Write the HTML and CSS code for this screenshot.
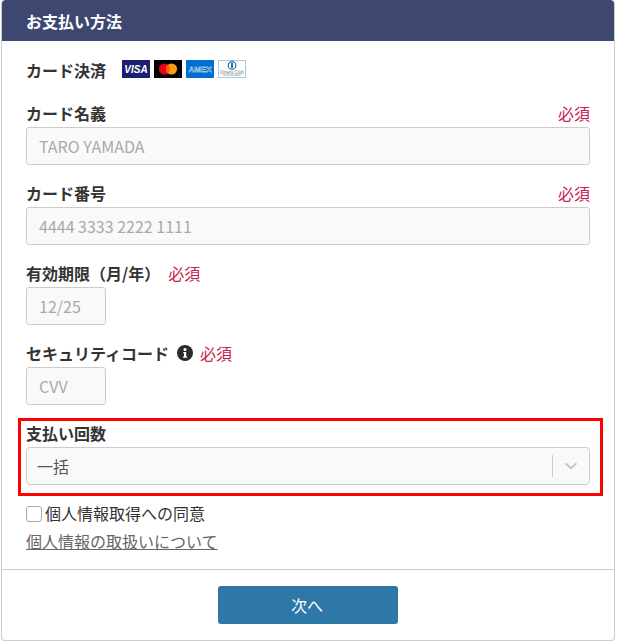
FILE: index.html
```html
<!DOCTYPE html>
<html lang="ja">
<head>
  <meta charset="utf-8">
  <title>お支払い方法</title>
  <link rel="stylesheet" href="styles.css">
</head>
<body>
  <div class="card">
    <div class="card-head">お支払い方法</div>

    <div class="card-body">
      <div class="brand-row">
        <span class="field-label">カード決済</span>
        <div class="brands">
          <svg class="brand" viewBox="0 0 28 18">
            <rect width="28" height="18" fill="#1a1f71"/>
            <text class="visa-text" x="14" y="13">VISA</text>
          </svg>
          <svg class="brand" viewBox="0 0 28 18">
            <rect width="28" height="18" fill="#000"/>
            <circle cx="10.5" cy="9" r="5.6" fill="#eb001b"/>
            <circle cx="17.5" cy="9" r="5.6" fill="#f79e1b"/>
            <path d="M14 4.6a5.6 5.6 0 0 1 0 8.800a5.6 5.6 0 0 1 0-8.800z" fill="#ff5f00"/>
          </svg>
          <svg class="brand" viewBox="0 0 28 18">
            <rect width="28" height="18" rx="1" fill="#016fd0"/>
            <text class="amex-text" x="14" y="12">AMEX</text>
          </svg>
          <svg class="brand" viewBox="0 0 28 18">
            <rect x="0.5" y="0.5" width="27" height="17" fill="#fff" stroke="#a9c8dc"/>
            <circle cx="14" cy="5.500" r="3.800" fill="#fff" stroke="#1b6fa8" stroke-width="1.200"/>
            <rect x="13" y="3" width="2" height="5" fill="#1b6fa8"/>
            <text class="diners-text" x="14" y="13.500">Diners Club</text>
            <rect x="5" y="14.500" width="18" height="1.200" fill="#b5bcc2"/>
          </svg>
        </div>
      </div>

      <div class="field">
        <label class="field-label label-split">カード名義 <span class="required">必須</span></label>
        <input class="text-input" type="text" placeholder="TARO YAMADA">
      </div>

      <div class="field">
        <label class="field-label label-split">カード番号 <span class="required">必須</span></label>
        <input class="text-input" type="text" placeholder="4444 3333 2222 1111">
      </div>

      <div class="field">
        <label class="field-label label-inline">有効期限（月/年） <span class="required">必須</span></label>
        <input class="text-input short" type="text" placeholder="12/25">
      </div>

      <div class="field">
        <label class="field-label label-inline">セキュリティコード
          <svg class="info-icon" viewBox="0 0 16 16">
            <circle cx="8" cy="8" r="8" fill="#2b2b2b"/>
            <circle cx="8" cy="4.400" r="1.500" fill="#fff"/>
            <path d="M6.300 6.900h2.900v4.500h1v1.300H6v-1.300h1V8.200H6.300z" fill="#fff"/>
          </svg>
          <span class="required">必須</span>
        </label>
        <input class="text-input short" type="text" placeholder="CVV">
      </div>

      <div class="highlight">
        <label class="field-label">支払い回数</label>
        <div class="select-box">
          <span class="select-value">一括</span>
          <span class="select-sep"></span>
          <svg class="select-arrow" viewBox="0 0 14 8">
            <path d="M1.500 1.200L7 6.300l5.500-5.100" fill="none" stroke="#c8c8c8" stroke-width="2"/>
          </svg>
        </div>
      </div>

      <label class="agree">
        <input class="check" type="checkbox">
        個人情報取得への同意
      </label>
      <a class="policy-link" href="#">個人情報の取扱いについて</a>
    </div>

    <div class="card-foot">
      <button class="next-btn">次へ</button>
    </div>
  </div>
</body>
</html>
```

FILE: styles.css
```css
* {
  box-sizing: border-box;
}

body {
  margin: 0;
  background: #fff;
  color: #333;
  font-family: "Noto Sans CJK JP", "Noto Sans", sans-serif;
  font-size: 16px;
}

.card {
  width: 614px;
  height: 641px;
  margin-left: 1px;
  border: 1px solid #ccc;
  border-top: 0;
  border-radius: 4px;
  display: flex;
  flex-direction: column;
}

.card-head {
  height: 41px;
  padding-left: 24px;
  background: #3e4770;
  color: #fff;
  font-size: 16px;
  font-weight: 700;
  line-height: 42px;
  border-radius: 4px 4px 0 0;
}

.card-body {
  padding: 18px 24px 0;
  height: 529px;
  border-bottom: 1px solid #ccc;
}

.field-label {
  display: block;
  height: 24px;
  font-size: 16px;
  font-weight: 700;
  line-height: 20px;
  color: #333;
}

.brand-row {
  display: flex;
  align-items: flex-start;
  gap: 16px;
  height: 44px;
}

.brand-row .field-label {
  line-height: 22px;
}

.brands {
  display: flex;
  gap: 4px;
  padding-top: 1px;
}

.brand {
  display: block;
  width: 28px;
  height: 18px;
}

.visa-text {
  fill: #fff;
  font-family: "Liberation Sans", sans-serif;
  font-size: 10px;
  font-style: italic;
  font-weight: 700;
  text-anchor: middle;
}

.amex-text {
  fill: #016fd0;
  stroke: #fff;
  stroke-width: 0.35px;
  font-family: "Liberation Sans", sans-serif;
  font-size: 8px;
  font-weight: 700;
  text-anchor: middle;
}

.diners-text {
  fill: #6f787e;
  font-family: "Liberation Sans", sans-serif;
  font-size: 4.500px;
  text-anchor: middle;
}

.field {
  height: 80px;
}

.label-split {
  display: flex;
  justify-content: space-between;
}

.label-inline {
  display: flex;
  align-items: flex-start;
  gap: 8px;
}

.required {
  color: #c7254e;
  font-weight: 400;
}

.text-input {
  display: block;
  width: 564px;
  height: 38px;
  padding: 0 12px;
  border: 1px solid #ccc;
  border-radius: 3px;
  background: #f9f9f9;
  color: #333;
  font-family: inherit;
  font-size: 16px;
}

.text-input::placeholder {
  color: #a9a9a9;
  opacity: 1;
}

.text-input.short {
  width: 80px;
}

.info-icon {
  width: 16px;
  height: 16px;
  margin: 2px -1px 0 0;
}

.highlight {
  margin: -5px -13px 0 -8px;
  width: 585px;
  height: 78px;
  padding: 2px 10px 0 5px;
  border: 3px solid #f00;
}

.select-box {
  display: flex;
  align-items: center;
  height: 38px;
  border: 1px solid #ccc;
  border-radius: 4px;
  background: #f9f9f9;
}

.select-value {
  flex: 1;
  padding-left: 10px;
  color: #555;
}

.select-sep {
  width: 1px;
  height: 22px;
  background: #ccc;
}

.select-arrow {
  width: 14px;
  height: 8px;
  margin: 0 11px;
}

.agree {
  display: flex;
  align-items: flex-start;
  gap: 3px;
  margin-top: 6px;
  height: 24px;
  line-height: 22px;
  color: #333;
}

.check {
  appearance: none;
  width: 16px;
  height: 16px;
  margin: 4px 0 0;
  border: 1px solid #aaa;
  border-radius: 3px;
  background: #fff;
}

.policy-link {
  display: block;
  height: 24px;
  margin-top: 4px;
  line-height: 22px;
  color: #666;
  text-decoration: underline;
}

.card-foot {
  display: flex;
  justify-content: center;
  padding-top: 16px;
}

.next-btn {
  width: 180px;
  height: 38px;
  padding: 0 8px 0 6px;
  border: 0;
  border-radius: 3px;
  background: #2e78a8;
  color: #fff;
  font-family: inherit;
  font-size: 16px;
}
```
